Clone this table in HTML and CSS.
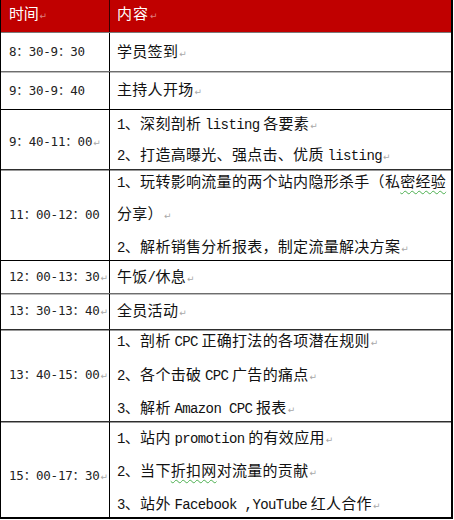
FILE: index.html
```html
<!DOCTYPE html>
<html lang="zh-CN">
<head>
<meta charset="utf-8">
<title>课程安排</title>
<link rel="stylesheet" href="styles.css">
</head>
<body>
<div class="schedule">
  <div class="row head">
    <div class="cell time"><p>时间<span class="pm">↵</span></p></div>
    <div class="cell content"><p>内容<span class="pm">↵</span></p></div>
  </div>
  <div class="row r1 sep-a">
    <div class="cell time"><p>8：30-9：30</p></div>
    <div class="cell content"><p>学员签到<span class="pm">↵</span></p></div>
  </div>
  <div class="row r2 sep-b">
    <div class="cell time"><p>9：30-9：40</p></div>
    <div class="cell content"><p>主持人开场<span class="pm">↵</span></p></div>
  </div>
  <div class="row r3 sep-c">
    <div class="cell time"><p>9：40-11：00<span class="pm">↵</span></p></div>
    <div class="cell content">
      <p><span class="en">1</span>、深刻剖析 <span class="en">listing</span> 各要素<span class="pm">↵</span></p>
      <p><span class="en">2</span>、打造高曝光、强点击、优质 <span class="en">listing</span><span class="pm">↵</span></p>
    </div>
  </div>
  <div class="row r4 sep-d">
    <div class="cell time"><p>11：00-12：00</p></div>
    <div class="cell content">
      <p><span class="en">1</span>、玩转影响流量的两个站内隐形杀手（私<span class="spell">密经验</span></p>
      <p>分享）<span class="pm">↵</span></p>
      <p><span class="en">2</span>、解析销售分析报表，制定流量解决方案<span class="pm">↵</span></p>
    </div>
  </div>
  <div class="row r5 sep-c">
    <div class="cell time"><p>12：00-13：30<span class="pm">↵</span></p></div>
    <div class="cell content"><p>午饭<span class="en">/</span>休息<span class="pm">↵</span></p></div>
  </div>
  <div class="row r6 sep-b">
    <div class="cell time"><p>13：30-13：40<span class="pm">↵</span></p></div>
    <div class="cell content"><p>全员活动<span class="pm">↵</span></p></div>
  </div>
  <div class="row r7 sep-d">
    <div class="cell time"><p>13：40-15：00<span class="pm">↵</span></p></div>
    <div class="cell content">
      <p><span class="en">1</span>、剖析 <span class="en">CPC</span> 正确打法的各项潜在规则<span class="pm">↵</span></p>
      <p><span class="en">2</span>、各个击破 <span class="en">CPC</span> 广告的痛点<span class="pm">↵</span></p>
      <p><span class="en">3</span>、解析 <span class="en">Amazon CPC</span> 报表<span class="pm">↵</span></p>
    </div>
  </div>
  <div class="row r8 sep-d">
    <div class="cell time"><p>15：00-17：30<span class="pm">↵</span></p></div>
    <div class="cell content">
      <p><span class="en">1</span>、站内 <span class="en">promotion</span> 的有效应用<span class="pm">↵</span></p>
      <p><span class="en">2</span>、当下<span class="spell">折扣网</span>对流量的贡献<span class="pm">↵</span></p>
      <p><span class="en">3</span>、站外 <span class="en">Facebook ,YouTube</span> 红人合作<span class="pm">↵</span></p>
    </div>
  </div>
</div>
</body>
</html>
```

FILE: styles.css
```css
* { box-sizing: border-box; }
html, body { margin: 0; padding: 0; background: #fff; }
body { font-family: "Noto Sans CJK SC", sans-serif; color: #111; }

.schedule {
  width: 453px;
  border-left: 1px solid #000;
  border-right: 2px solid #000;
  border-bottom: 2px solid #000;
}
.row {
  display: grid;
  grid-template-columns: 108px 1fr;
}
.cell {
  display: flex;
  flex-direction: column;
  justify-content: center;
  overflow: hidden;
  white-space: nowrap;
}
.cell p { margin: 0; line-height: 30px; }

.time {
  padding-left: 8px;
  font-family: "DejaVu Sans Mono", "Noto Sans CJK SC", monospace;
  font-size: 12.5px;
  color: #222;
}
.time p { letter-spacing: -0.2px; }
.content {
  border-left: 1px solid #000;
  padding-left: 7px;
  font-size: 15px;
  letter-spacing: 0.3px;
}
.en {
  font-family: "Liberation Mono", monospace;
  font-size: 14px;
  letter-spacing: -0.6px;
}
.pm {
  font-family: "DejaVu Sans", sans-serif;
  font-size: 9px;
  color: #a8a8a8;
  margin-left: 1px;
  letter-spacing: 0;
}
.spell {
  text-decoration: underline wavy #4caf50;
  text-decoration-thickness: 1px;
  text-underline-offset: 3px;
}

.head {
  height: 32px;
  background: #c00000;
  color: #fff;
}
.head .cell {
  font-family: "Noto Sans CJK SC", sans-serif;
  font-size: 15px;
  letter-spacing: 1px;
  color: #fff;
  padding-bottom: 3px;
}
.head .time { padding-left: 8px; }
.head .content { border-left-color: #3a0000; }
.head .pm { color: rgba(255, 255, 255, 0.5); }

.sep-a { border-top: 1px solid #7a7a7a; }
.sep-b { border-top: 1px solid #6e6e6e; box-shadow: inset 0 1px 0 #bdbdbd; }
.sep-c { border-top: 1px solid #000; }
.sep-d { border-top: 1px solid #2e2e2e; box-shadow: inset 0 1px 0 #9a9a9a; }

.r1 { height: 39px; }
.r2 { height: 38px; }
.r3 { height: 60px; }
.r3 .cell p { line-height: 28px; }
.r3 .time { padding-top: 6px; }
.r4 { height: 91px; }
.r5 { height: 33px; }
.r6 { height: 36px; }
.r7 { height: 92px; }
.r7 .cell p { line-height: 30.5px; }
.r8 { height: 96px; }
.r8 .time { padding-top: 14px; }
.r8 .content { padding-top: 4px; }
.r8 .content p { line-height: 30px; }
```
